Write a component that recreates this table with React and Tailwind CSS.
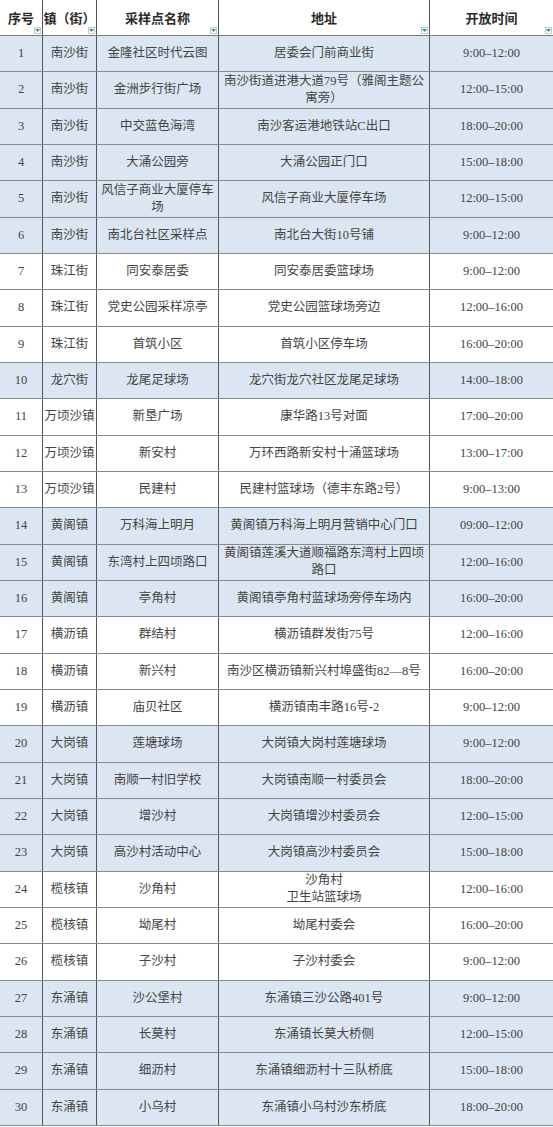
const rows = [
  ['1', '南沙街', '金隆社区时代云图', '居委会门前商业街', '9:00–12:00', 1],
  ['2', '南沙街', '金洲步行街广场', '南沙街道进港大道79号（雅阁主题公寓旁）', '12:00–15:00', 1],
  ['3', '南沙街', '中交蓝色海湾', '南沙客运港地铁站C出口', '18:00–20:00', 1],
  ['4', '南沙街', '大涌公园旁', '大涌公园正门口', '15:00–18:00', 1],
  ['5', '南沙街', '风信子商业大厦停车场', '风信子商业大厦停车场', '12:00–15:00', 1],
  ['6', '南沙街', '南北台社区采样点', '南北台大街10号铺', '9:00–12:00', 1],
  ['7', '珠江街', '同安泰居委', '同安泰居委篮球场', '9:00–12:00', 0],
  ['8', '珠江街', '党史公园采样凉亭', '党史公园篮球场旁边', '12:00–16:00', 0],
  ['9', '珠江街', '首筑小区', '首筑小区停车场', '16:00–20:00', 0],
  ['10', '龙穴街', '龙尾足球场', '龙穴街龙穴社区龙尾足球场', '14:00–18:00', 1],
  ['11', '万顷沙镇', '新垦广场', '康华路13号对面', '17:00–20:00', 0],
  ['12', '万顷沙镇', '新安村', '万环西路新安村十涌篮球场', '13:00–17:00', 0],
  ['13', '万顷沙镇', '民建村', '民建村篮球场（德丰东路2号）', '9:00–13:00', 0],
  ['14', '黄阁镇', '万科海上明月', '黄阁镇万科海上明月营销中心门口', '09:00–12:00', 1],
  ['15', '黄阁镇', '东湾村上四顷路口', '黄阁镇莲溪大道顺福路东湾村上四顷路口', '12:00–16:00', 1],
  ['16', '黄阁镇', '亭角村', '黄阁镇亭角村蓝球场旁停车场内', '16:00–20:00', 1],
  ['17', '横沥镇', '群结村', '横沥镇群发街75号', '12:00–16:00', 0],
  ['18', '横沥镇', '新兴村', '南沙区横沥镇新兴村埠盛街82—8号', '16:00–20:00', 0],
  ['19', '横沥镇', '庙贝社区', '横沥镇南丰路16号-2', '9:00–12:00', 0],
  ['20', '大岗镇', '莲塘球场', '大岗镇大岗村莲塘球场', '9:00–12:00', 1],
  ['21', '大岗镇', '南顺一村旧学校', '大岗镇南顺一村委员会', '18:00–20:00', 1],
  ['22', '大岗镇', '增沙村', '大岗镇增沙村委员会', '12:00–15:00', 1],
  ['23', '大岗镇', '高沙村活动中心', '大岗镇高沙村委员会', '15:00–18:00', 1],
  ['24', '榄核镇', '沙角村', '沙角村\n卫生站篮球场', '12:00–16:00', 0],
  ['25', '榄核镇', '坳尾村', '坳尾村委会', '16:00–20:00', 0],
  ['26', '榄核镇', '子沙村', '子沙村委会', '9:00–12:00', 0],
  ['27', '东涌镇', '沙公堡村', '东涌镇三沙公路401号', '9:00–12:00', 1],
  ['28', '东涌镇', '长莫村', '东涌镇长莫大桥侧', '12:00–15:00', 1],
  ['29', '东涌镇', '细沥村', '东涌镇细沥村十三队桥底', '15:00–18:00', 1],
  ['30', '东涌镇', '小乌村', '东涌镇小乌村沙东桥底', '18:00–20:00', 1],
];

const headers = ['序号', '镇（街）', '采样点名称', '地址', '开放时间'];
const widths = ['w-[43px]', 'w-[54px]', 'w-[122px]', 'w-[211px]', 'w-[123px]'];

const FilterMark = () => (
  <span className="absolute right-[1px] bottom-[1px] w-[7px] h-[7px] bg-white border border-[#c8c8c8] flex items-center justify-center">
    <svg width="5" height="3" viewBox="0 0 5 3">
      <path d="M0 0 L5 0 L2.5 3 Z" fill="#2e9e6a" />
    </svg>
  </span>
);

export default function App() {
  return (
    <div
      className="w-[553px] h-[1127px] bg-white text-[#444] overflow-hidden"
      style={{ fontFamily: '"Liberation Serif", "Noto Sans CJK SC", serif' }}
    >
      <div className="flex h-[36px] border-b border-[#7a7a7a] bg-white">
        {headers.map((h, i) => (
          <div
            key={h}
            className={`${widths[i]} relative shrink-0 flex items-center justify-center text-[13px] font-bold text-[#2a2a2a] ${i < 4 ? 'border-r border-[#555]' : ''}`}
            style={{ fontFamily: '"Noto Sans CJK SC", sans-serif' }}
          >
            {h}
            <FilterMark />
          </div>
        ))}
      </div>
      {rows.map((r) => (
        <div
          key={r[0]}
          className={`flex h-[36.33px] border-b border-[#8a8a8a] ${r[5] ? 'bg-[#dce6f2]' : 'bg-white'}`}
        >
          {r.slice(0, 5).map((c, i) => (
            <div
              key={i}
              className={`${widths[i]} shrink-0 flex items-center justify-center text-center ${i === 1 ? 'px-0' : 'px-[3px]'} text-[12.5px] leading-[17px] whitespace-pre-line ${i < 4 ? 'border-r border-[#555]' : ''}`}
            >
              {c}
            </div>
          ))}
        </div>
      ))}
    </div>
  );
}
